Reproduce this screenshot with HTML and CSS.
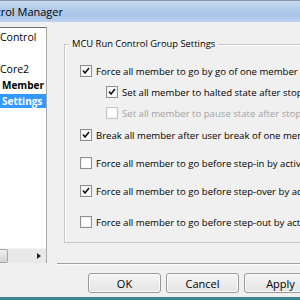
FILE: index.html
```html
<!DOCTYPE html>
<html lang="en">
<head>
    <meta charset="UTF-8">
    <title>MCU Run Control Manager</title>
    <link rel="stylesheet" href="styles.css">
</head>
<body>
    <div class="window">
        <div class="titlebar">
            <div class="title"><span>MCU Run Control Manager</span></div>
        </div>

        <div class="dialog">
            <div class="side">
                <div class="tree">
                    <div class="tree-rows">
                        <div class="node">Control</div>
                        <div class="node"></div>
                        <div class="node">Core2</div>
                        <div class="node bold">Member</div>
                        <div class="node bold selected">Settings</div>
                    </div>
                    <div class="hscroll">
                        <span class="thumb"></span>
                        <span class="arrow"></span>
                    </div>
                </div>
            </div>

            <div class="main">
                <fieldset class="groupbox">
                    <legend>MCU Run Control Group Settings</legend>
                    <label class="opt first"><span class="box checked"></span>Force all member to go by go of one member</label>
                    <label class="opt sub"><span class="box checked"></span>Set all member to halted state after stop by break</label>
                    <label class="opt sub disabled"><span class="box"></span>Set all member to pause state after stop by break</label>
                    <label class="opt near"><span class="box checked"></span>Break all member after user break of one member</label>
                    <label class="opt far"><span class="box"></span>Force all member to go before step-in by active member</label>
                    <label class="opt far"><span class="box checked"></span>Force all member to go before step-over by active member</label>
                    <label class="opt last"><span class="box"></span>Force all member to go before step-out by active member</label>
                </fieldset>

                <div class="separator"></div>

                <div class="buttons">
                    <button class="btn">OK</button>
                    <button class="btn">Cancel</button>
                    <button class="btn">Apply</button>
                </div>
            </div>
        </div>

        <div class="frame-bottom"></div>
    </div>
</body>
</html>
```

FILE: styles.css
```css
* {
    box-sizing: border-box;
    margin: 0;
    padding: 0;
}

body {
    width: 300px;
    height: 300px;
    overflow: hidden;
    font-family: 'Open Sans', 'Noto Sans', sans-serif;
    color: #000;
}

.window {
    display: flex;
    flex-direction: column;
    width: 300px;
    height: 300px;
    background: #f0f0f0;
}

/* Title bar */
.titlebar {
    height: 22px;
    flex: none;
    border-top: 1px solid #8797ad;
    background: linear-gradient(#c9daef 0%, #b4cce9 35%, #aac6ea 70%, #bdd3ee 100%);
}

.title {
    display: flex;
    justify-content: flex-end;
    width: 63px;
    overflow: hidden;
    white-space: nowrap;
    font-size: 11px;
    line-height: 21px;
}

/* Dialog body */
.dialog {
    flex: 1;
    display: flex;
    min-height: 0;
}

.side {
    width: 47px;
    flex: none;
    padding-top: 5px;
}

.tree {
    display: flex;
    flex-direction: column;
    height: 236px;
    background: #fff;
    border-top: 1px solid #6e6e6e;
    border-right: 1px solid #a9a9a9;
}

.tree-rows {
    flex: 1;
    display: flex;
    flex-direction: column;
    gap: 2px;
    padding-top: 2px;
    white-space: nowrap;
    overflow: hidden;
}

.node {
    height: 14px;
    line-height: 14px;
    font-size: 10.5px;
}

.node.bold {
    font-weight: 700;
    padding-left: 2px;
    font-size: 10px;
}

.node.selected {
    background: #3399ff;
    color: #fff;
}

.hscroll {
    position: relative;
    height: 15px;
    flex: none;
    background: #e9e9e9;
    border-top: 1px solid #f4f4f4;
}

.hscroll .thumb {
    display: block;
    width: 8px;
    height: 14px;
    background: linear-gradient(#f2f2f2, #d2d2d2);
    border: 1px solid #a7a7a7;
    border-left: none;
    border-radius: 0 2px 2px 0;
}

.hscroll .arrow {
    position: absolute;
    left: 37px;
    top: 4px;
    border-left: 4px solid #222;
    border-top: 3px solid transparent;
    border-bottom: 3px solid transparent;
}

/* Main column */
.main {
    flex: 1;
    min-width: 0;
    display: flex;
    flex-direction: column;
}

.groupbox {
    margin: 15px 0 0 17px;
    width: 270px;
    height: 206px;
    border: 1px solid #c8c8c8;
    box-shadow: inset 1px 1px 0 #fff;
    padding: 0;
    display: flex;
    flex-direction: column;
    font-size: 9.6px;
}

.groupbox legend {
    margin-left: 4px;
    padding: 0 3px;
    line-height: 14px;
    font-size: 9.4px;
}

.opt {
    display: flex;
    align-items: center;
    gap: 4px;
    height: 14px;
    padding-left: 15px;
    white-space: nowrap;
    margin-top: 7px;
}

.opt.first { margin-top: 13px; }
.opt.sub { padding-left: 41px; }
.opt.near { margin-top: 8px; }
.opt.far { margin-top: 14px; }
.opt.last { margin-top: 17px; }

.opt.disabled {
    color: #a3a3a3;
}

.box {
    flex: none;
    width: 12px;
    height: 12px;
    border: 1px solid #8e8f8f;
    background: #fff;
    box-shadow: inset 0 0 0 1px #f4f4f4;
}

.box.checked {
    background: #fff url("data:image/svg+xml,%3Csvg xmlns='http://www.w3.org/2000/svg' width='10' height='10'%3E%3Cpath d='M2 4.5 L4 7 L8 2' fill='none' stroke='%23111' stroke-width='1.6'/%3E%3C/svg%3E") center no-repeat;
}

.opt.disabled .box {
    border-color: #c6c6c6;
}

.separator {
    margin: 20px 0 0 10px;
    height: 2px;
    border-top: 1px solid #a0a0a0;
    border-bottom: 1px solid #fff;
}

.buttons {
    display: flex;
    gap: 5px;
    margin: 8px 0 0 41px;
}

.btn {
    flex: none;
    width: 73px;
    height: 20px;
    font-family: 'Open Sans', 'Noto Sans', sans-serif;
    font-size: 11px;
    color: #000;
    border: 1px solid #9a9a9a;
    border-radius: 3px;
    background: linear-gradient(#f5f5f5, #e4e4e4);
    box-shadow: inset 0 0 0 1px #fbfbfb;
}

.frame-bottom {
    height: 3px;
    flex: none;
    background: #3a8791;
}
```
